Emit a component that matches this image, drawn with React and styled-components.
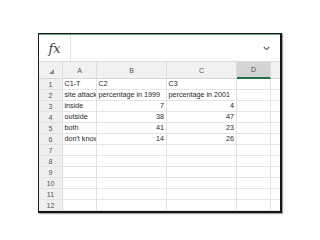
import React from "react";
import styled, { createGlobalStyle } from "styled-components";

const Global = createGlobalStyle`
  html, body { margin: 0; padding: 0; background: #ffffff; }
  body { font-family: "Liberation Sans", Arial, sans-serif; }
`;

const Page = styled.div`
  width: 320px;
  height: 240px;
  padding: 33px 0 0 38px;
  box-sizing: border-box;
`;

const Frame = styled.div`
  width: 244px;
  box-sizing: border-box;
  border-top: 1.5px solid #1c1c1c;
  border-left: 1.5px solid #1c1c1c;
  border-right: 2px solid #151515;
  border-bottom: 2px solid #151515;
  box-shadow: 1px 1px 1px rgba(0,0,0,0.35);
  background: #fff;
`;

const GreenLine = styled.div`
  height: 1px;
  background: #6aa37a;
`;

const FormulaBar = styled.div`
  display: flex;
  align-items: stretch;
  height: 26px;
  border-bottom: 1px solid #dcdcdc;
`;

const FxBox = styled.div`
  width: 31px;
  display: flex;
  align-items: center;
  justify-content: center;
  border-right: 1px solid #e2e2e2;
  font-family: "DejaVu Serif", "Liberation Serif", serif;
  font-style: italic;
  font-size: 13px;
  color: #444;
`;

const FormulaInput = styled.div`
  flex: 1;
  display: flex;
  align-items: center;
  justify-content: flex-end;
  padding-right: 10px;
`;

const Grid = styled.div`
  display: grid;
  grid-template-columns: 24px 34px 70px 70px 34px 9px;
  grid-auto-rows: 11px;
  grid-template-rows: 17px;
`;

const ColHead = styled.div`
  background: ${(p) => (p.$selected ? "#d4d4d4" : "#f1f1f1")};
  border-right: 1px solid ${(p) => (p.$last ? "transparent" : "#dcdcdc")};
  border-bottom: ${(p) => (p.$selected ? "2px solid #217346" : "1px solid #d6d6d6")};
  box-sizing: border-box;
  display: flex;
  align-items: center;
  justify-content: center;
  font-size: 7px;
  color: #555;
  position: relative;
`;

const RowHead = styled.div`
  background: #efefef;
  border-right: 1px solid #dcdcdc;
  border-bottom: 1px solid #e2e2e2;
  box-sizing: border-box;
  display: flex;
  align-items: center;
  justify-content: center;
  font-size: 7.2px;
  color: #555;
`;

const Cell = styled.div`
  border-right: 1px solid ${(p) => (p.$last ? "transparent" : "#e0e0e0")};
  border-bottom: 1px solid #e4e4e4;
  box-sizing: border-box;
  font-size: 7.2px;
  color: #1f1f1f;
  white-space: nowrap;
  overflow: ${(p) => (p.$spill ? "visible" : "hidden")};
  text-align: ${(p) => (p.$num ? "right" : "left")};
  padding: 0 2px 0 1.5px;
  line-height: 10px;
  position: relative;
  z-index: ${(p) => (p.$spill ? 1 : 0)};
`;

const Corner = styled.svg`
  position: absolute;
  right: 8px;
  bottom: 4px;
`;

const rows = [
  ["C1-T", "C2", "C3", "", ""],
  ["site attack", "percentage in 1999", "percentage in 2001", "", ""],
  ["inside", "7", "4", "", ""],
  ["outside", "38", "47", "", ""],
  ["both", "41", "23", "", ""],
  ["don't know", "14", "26", "", ""],
  ["", "", "", "", ""],
  ["", "", "", "", ""],
  ["", "", "", "", ""],
  ["", "", "", "", ""],
  ["", "", "", "", ""],
  ["", "", "", "", ""],
];

const isNum = (s) => /^\d+$/.test(s);

export default function App() {
  return (
    <>
      <Global />
      <Page>
        <Frame>
          <GreenLine />
          <FormulaBar>
            <FxBox>fx</FxBox>
            <FormulaInput>
              <svg width="7" height="5" viewBox="0 0 7 5">
                <path d="M0.8 1 L3.5 3.6 L6.2 1" fill="none" stroke="#555" strokeWidth="1.1" />
              </svg>
            </FormulaInput>
          </FormulaBar>
          <Grid>
            <ColHead>
              <Corner width="5" height="5" viewBox="0 0 5 5">
                <path d="M5 0 L5 5 L0 5 Z" fill="#8a8a8a" />
              </Corner>
            </ColHead>
            <ColHead>A</ColHead>
            <ColHead>B</ColHead>
            <ColHead>C</ColHead>
            <ColHead $selected>D</ColHead>
            <ColHead $last />
            {rows.map((r, i) => (
              <React.Fragment key={i}>
                <RowHead>{i + 1}</RowHead>
                {r.map((v, j) => (
                  <Cell key={j} $num={isNum(v)} $last={j === 4}>
                    {v}
                  </Cell>
                ))}
              </React.Fragment>
            ))}
          </Grid>
        </Frame>
      </Page>
    </>
  );
}
